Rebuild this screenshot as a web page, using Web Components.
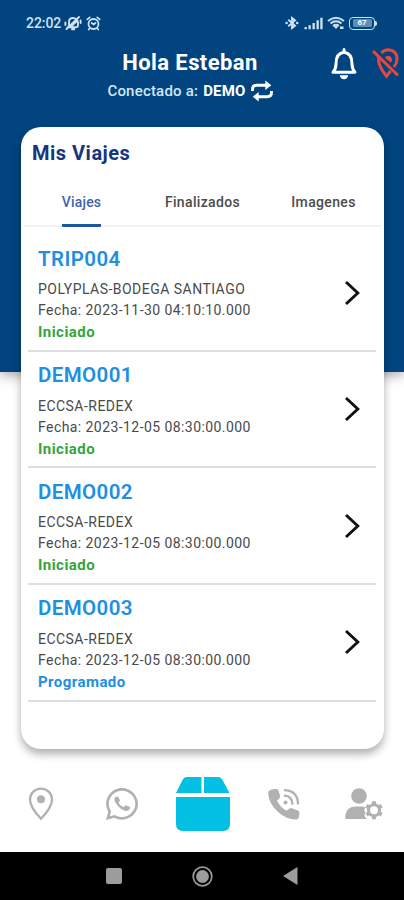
<!DOCTYPE html>
<html lang="es">
<head>
<meta charset="utf-8">
<title>Mis Viajes</title>
<style>
html,body{margin:0;padding:0;background:#fff}
body{width:404px;height:900px;overflow:hidden;font-family:Roboto,"Liberation Sans",sans-serif}
</style>
</head>
<body>
<trips-app></trips-app>
<script>
const define = (name, html) => customElements.define(name, class extends HTMLElement {
  connectedCallback() {
    if (this.shadowRoot) return;
    const root = this.attachShadow({ mode: "open" });
    const t = document.createElement("template");
    t.innerHTML = typeof html === "function" ? html(this) : html;
    root.append(t.content.cloneNode(true));
  }
});

/* view box, then shapes, for every glyph in the app */
const icons = {
  muted: ["0 0 18 16", `<g fill="none" stroke="currentColor" stroke-width="1.9" stroke-linecap="round"><path d="M5 11.500V7Q5 3 9 3q2 0 3 1.200M3.600 12.200h8.600q2 0 1.800-2V7M8 14.300h2.200M2.500 14 15 2M1.400 7.500v2.600M16.600 5.400V8M7.500 11l6-5.500"/></g>`],
  alarm: ["0 0 15 15", `<g fill="none" stroke="currentColor" stroke-width="1.8" stroke-linecap="round"><circle cx="7.500" cy="8" r="5"/><path d="M1.300 3.400 3.800 1.400M13.700 3.400l-2.500-2M5.700 7l2 1.400L9.500 7M3.600 12.500l-.9 1M11.400 12.500l.9 1"/></g>`],
  bluetooth: ["0 0 14 16", `<path d="M3.300 4.800 10 10.600 7 13V3l3 2.400-6.700 5.800" fill="none" stroke="currentColor" stroke-width="1.900"/><circle cx="1.600" cy="8" r="1.300" fill="currentColor"/><circle cx="12.200" cy="8" r="1.300" fill="currentColor"/>`],
  signal: ["0 0 19 13", `<path d="M.5 10h2.300v2.300H.5zM4.500 8.300h2.300v4H4.500zM8.500 6h2.300v6.300H8.500zM12.500 3.300h2.300v9h-2.300zM16.300.8h2.300v11.500h-2.300z" fill="currentColor"/>`],
  wifi: ["0 0 18 14", `<g fill="none" stroke="currentColor" stroke-width="1.900"><path d="M1 5Q9-1.600 17 5M3.500 7.600q5.500-4.500 11 0M6 10q3-2.300 6 0"/></g><path d="m6.800 10.600 2.200 2.400 2.200-2.400Q9 9 6.800 10.600zM13 10.500h3.500v2.500H13z" fill="currentColor"/>`],
  bell: ["0 0 28 33", `<path d="M14 2.600v2M3 25.200q3-3.200 3-8.500 0-10.500 8-11.500 8 1 8 11.500 0 5.300 3 8.500z" fill="none" stroke="currentColor" stroke-width="3" stroke-linecap="round" stroke-linejoin="round"/><path d="M9.800 28.300h8.400q-.7 4-4.200 4t-4.200-4z" fill="currentColor"/>`],
  pinOff: ["0 0 28 31", `<g fill="none" stroke="currentColor" stroke-width="3"><path d="M1 3.200 26 27.500M9.300 4.800q3.200-3 7.200-3 8.500.6 8.500 9.200 0 4-3 8M18.500 23l-4 5.300Q7.500 19.500 6.600 13V9"/></g><path d="M12.800 9.700q1.200-2 3.700-1.900 3.500.4 3.500 4 0 1.700-1.200 3z" fill="currentColor"/>`],
  repeat: ["0 0 22 22", `<g fill="none" stroke="currentColor" stroke-width="2.900"><path d="M1.500 11V9.500Q1.500 5.300 5.700 5.300H16M20.500 11v1.500q0 4.200-4.200 4.200H6"/></g><path d="m14.300.6 6 4.700-6 4.700zM7.700 12 1.700 16.700l6 4.700z" fill="currentColor"/>`],
  chevron: ["0 0 16 26", `<path d="m2 2 11.800 11L2 24" fill="none" stroke="currentColor" stroke-width="2.900"/>`],
  pin: ["0 0 26 34", `<path d="M13 1.700C6.500 1.700 2 6.500 2 12.700 2 18.500 8.500 27 13 31.800 17.500 27 24 18.500 24 12.700 24 6.500 19.500 1.700 13 1.700z" fill="none" stroke="currentColor" stroke-width="2.300"/><circle cx="13" cy="12.200" r="4" fill="currentColor"/>`],
  whatsapp: ["0 32 448 448", `<path fill="currentColor" d="M380.900 97.100C339 55.100 283.200 32 223.900 32c-122.400 0-222 99.600-222 222 0 39.100 10.200 77.300 29.600 111L0 480l117.700-30.900c32.400 17.700 68.900 27 106.100 27h.1c122.300 0 224.100-99.600 224.100-222 0-59.300-25.200-115-67.100-157zm-157 341.600c-33.200 0-65.700-8.900-94-25.700l-6.700-4-69.800 18.300L72 359.200l-4.400-7c-18.500-29.400-28.200-63.300-28.200-98.200 0-101.700 82.800-184.500 184.600-184.500 49.300 0 95.600 19.200 130.400 54.100 34.800 34.900 56.200 81.200 56.100 130.500 0 101.800-84.900 184.600-186.600 184.600z"/><path fill="currentColor" d="M125 166l29-16q12-3 18 8l22 42q4 12-6 20l-14 14q22 46 72 66l18-20q8-8 18-4l46 20q12 6 8 18-8 32-46 40-50 0-104-52-66-62-66-104-2-20 5-32z"/>`],
  box: ["0 0 54 54", `<path fill="currentColor" d="M11 0h14.500v16H0L6.500 3Q8 0 11 0zM28 0h14q3 0 4.500 3L53.500 16H28zM0 20h54v27q0 7-7 7H7q-7 0-7-7z"/>`],
  call: ["0 0 32 32", `<path fill="currentColor" d="M1 2.800Q4 .5 8.500 1q1.500.2 2 1.700l1.600 5q.3 1.500-.8 2.600L9 12.800q3.300 6.500 9.500 10l3-2.300q1.200-.8 2.500-.3l6 2.200q1.700.7 1.500 2.600l-.7 4.500q-.4 1.800-2.300 2Q18 31.500 9.500 23.500.500 15 .2 5 .2 3.600 1 2.800z"/><circle cx="17.500" cy="14.500" r="2" fill="currentColor"/><g fill="none" stroke="currentColor" stroke-width="2.300"><path d="M16 7.600q8-.4 8.500 9M16 2.200Q30 2.500 30 16.500"/></g>`],
  user: ["0 0 39 32", `<circle cx="14" cy="8" r="7.800" fill="currentColor"/><path fill="currentColor" d="M.3 31v-4Q1.500 18.700 11 18.500h6q2 0 3.500.8-2.200 3-.2 5-2 3.500 1.500 6.700z"/><circle cx="29" cy="22.200" r="5.500" fill="none" stroke="currentColor" stroke-width="3"/><path d="M29 13.300v3M29 28v3.200M21.400 17.700l2.500 1.500M34.200 25.200l2.500 1.500M21.400 26.700l2.500-1.500M34.200 19.200l2.500-1.500" stroke="currentColor" stroke-width="4"/>`],
  recents: ["0 0 16 16", `<rect width="16" height="16" rx="2" fill="currentColor"/>`],
  home: ["0 0 21 21", `<circle cx="10.500" cy="10.500" r="9.300" fill="none" stroke="currentColor" stroke-width="1.700"/><circle cx="10.500" cy="10.500" r="6.400" fill="currentColor"/>`],
  back: ["0 0 15 18", `<path d="M0 9 14.500 0v18z" fill="currentColor"/>`]
};

define("app-icon", el => {
  const [box, shapes] = icons[el.getAttribute("name")];
  return `<style>:host{display:block;flex:none}svg{display:block;width:100%;height:100%}</style>
  <svg viewBox="${box}" preserveAspectRatio="none" aria-hidden="true">${shapes}</svg>`;
});

define("status-bar", `<style>
:host{display:flex;align-items:center;height:46px;padding:0 27px 0 26px;box-sizing:border-box;color:#cfe3f4}
.time{width:38px;font-size:14px;letter-spacing:-.05px;font-weight:500}
.gap{flex:1}
.battery{width:26px;height:13px;border:1.500px solid currentColor;border-radius:4px;box-sizing:border-box;display:grid;place-items:center}
.level{background:#5d8fba;color:#fff;width:19px;height:8px;border-radius:1.500px;font-size:8px;line-height:8px;text-align:center;font-weight:700}
.tip{width:2px;height:5px;background:currentColor;border-radius:0 2px 2px 0}
</style>
<span class="time">22:02</span>
<app-icon name="muted" style="width:18px;height:16px"></app-icon>
<app-icon name="alarm" style="width:15px;height:15px;margin-left:4px"></app-icon>
<span class="gap"></span>
<app-icon name="bluetooth" style="width:14px;height:16px"></app-icon>
<app-icon name="signal" style="width:19px;height:13px;margin-left:5px"></app-icon>
<app-icon name="wifi" style="width:18px;height:14px;margin:0 4px 0 4px"></app-icon>
<span class="battery"><span class="level">67</span></span><span class="tip"></span>`);

define("app-greeting", `<style>
:host{display:grid;grid-template-columns:50px 280px 74px;height:81px;color:#fff}
.text{grid-column:2;display:flex;flex-direction:column;align-items:center}
h1{margin:3px 0 0;font-size:22px;line-height:28px;font-weight:700;letter-spacing:.4px;white-space:nowrap}
.line{display:flex;align-items:center;height:24px;margin-top:2px;font-size:15px;color:#d3e6f5;white-space:nowrap;font-weight:500;letter-spacing:.2px}
b{color:#fff;margin:0 5px 0 5px;letter-spacing:.2px}
.actions{display:flex;padding-top:1px;gap:14px}
</style>
<div class="text"><h1><slot name="title"></slot></h1>
<div class="line"><slot name="label"></slot><b><slot name="server"></slot></b><app-icon name="repeat" style="width:22px;height:22px;color:#fff"></app-icon></div></div>
<div class="actions"><app-icon name="bell" style="width:28px;height:33px"></app-icon><app-icon name="pinOff" style="width:28px;height:31px;color:#e4473d;margin-top:1px"></app-icon></div>`);

define("tab-strip", `<style>
:host{display:grid;grid-template-columns:repeat(3,121px);height:51px;margin:0 3px;box-sizing:border-box;border-bottom:2px solid #f1f2f3;font-size:14px;font-weight:500;color:#4c4c4c;letter-spacing:.35px;justify-content:center}
::slotted(*){display:flex;justify-content:center;line-height:52px}
::slotted([selected]){justify-self:center;color:#3b66a8;height:48px;border-bottom:3px solid #1e55a0;border-radius:1px;letter-spacing:.15px}
</style><slot></slot>`);

define("trip-row", el => `<style>
:host{display:flex;align-items:center;justify-content:space-between;height:116.600px;box-sizing:border-box;border-bottom:2px solid #dedfe0;margin:0 8px 0 7px;padding:0 16px 0 10px}
.info{align-self:start;padding-top:10.400px;white-space:nowrap;color:#4a4a4a;font-size:14px;line-height:21px}
h3{margin:0 0 7.500px;font-size:20.500px;line-height:26px;color:#208fe2;font-weight:600;letter-spacing:.4px}
.state{font-weight:700;font-size:15px;line-height:22px;letter-spacing:.45px;color:${el.getAttribute("state") === "Programado" ? "#208fe2" : "#35a53b"}}
.route{letter-spacing:.47px}.date{letter-spacing:.43px}
app-icon{width:16px;height:26px;color:#111}
</style>
<div class="info"><h3>${el.getAttribute("code")}</h3>
<div class="route">${el.getAttribute("route")}</div>
<div class="date">Fecha: ${el.getAttribute("date")}</div>
<div class="state">${el.getAttribute("state")}</div></div>
<app-icon name="chevron"></app-icon>`);

define("trips-card", `<style>
:host{display:block;width:363px;height:622px;margin-left:21px;background:#fff;border-radius:20px;box-shadow:0 5px 9px rgba(0,0,0,.32);overflow:hidden}
h2{margin:0;padding:12px 0 0 11px;height:49px;box-sizing:border-box;font-size:20px;line-height:28px;font-weight:700;letter-spacing:.5px;color:#15357e}
.list{padding-top:8.300px}
</style><h2><slot name="heading"></slot></h2><slot name="tabs"></slot><div class="list"><slot></slot></div>`);

define("bottom-nav", `<style>
:host{display:grid;grid-template-columns:repeat(5,80.750px);height:103px;box-sizing:border-box;padding-top:7px;place-items:center;color:#b1b1b1}
</style>
<app-icon name="pin" style="width:26px;height:34px;margin-left:2px"></app-icon>
<app-icon name="whatsapp" style="width:32px;height:32px;margin-left:2px"></app-icon>
<app-icon name="box" style="width:54px;height:54px;color:#04bfe4;margin-left:2px"></app-icon>
<app-icon name="call" style="width:32px;height:32px;margin-left:2px"></app-icon>
<app-icon name="user" style="width:39px;height:32px;margin-left:2px"></app-icon>`);

define("system-nav", `<style>
:host{display:flex;height:48px;background:#000;color:#9c9c9c;align-items:center;justify-content:center;gap:70px}
</style>
<app-icon name="recents" style="width:16px;height:16px"></app-icon>
<app-icon name="home" style="width:21px;height:21px"></app-icon>
<app-icon name="back" style="width:15px;height:18px"></app-icon>`);

define("trips-app", `<style>
:host{display:grid;width:404px;height:900px;overflow:hidden}
.backdrop,.screen{grid-area:1/1}
.backdrop{height:372px;background:#01447f;box-shadow:0 3px 12px rgba(0,0,0,.36)}
.screen{position:relative;display:flex;flex-direction:column}
</style>
<div class="backdrop"></div>
<div class="screen">
<status-bar></status-bar>
<app-greeting><span slot="title">Hola Esteban</span><span slot="label">Conectado a:</span><span slot="server">DEMO</span></app-greeting>
<trips-card><span slot="heading">Mis Viajes</span>
<tab-strip slot="tabs"><span selected>Viajes</span><span>Finalizados</span><span>Imagenes</span></tab-strip>
<trip-row code="TRIP004" route="POLYPLAS-BODEGA SANTIAGO" date="2023-11-30 04:10:10.000" state="Iniciado"></trip-row>
<trip-row code="DEMO001" route="ECCSA-REDEX" date="2023-12-05 08:30:00.000" state="Iniciado"></trip-row>
<trip-row code="DEMO002" route="ECCSA-REDEX" date="2023-12-05 08:30:00.000" state="Iniciado"></trip-row>
<trip-row code="DEMO003" route="ECCSA-REDEX" date="2023-12-05 08:30:00.000" state="Programado"></trip-row>
</trips-card>
<bottom-nav></bottom-nav>
<system-nav></system-nav>
</div>`);
</script>
</body>
</html>
